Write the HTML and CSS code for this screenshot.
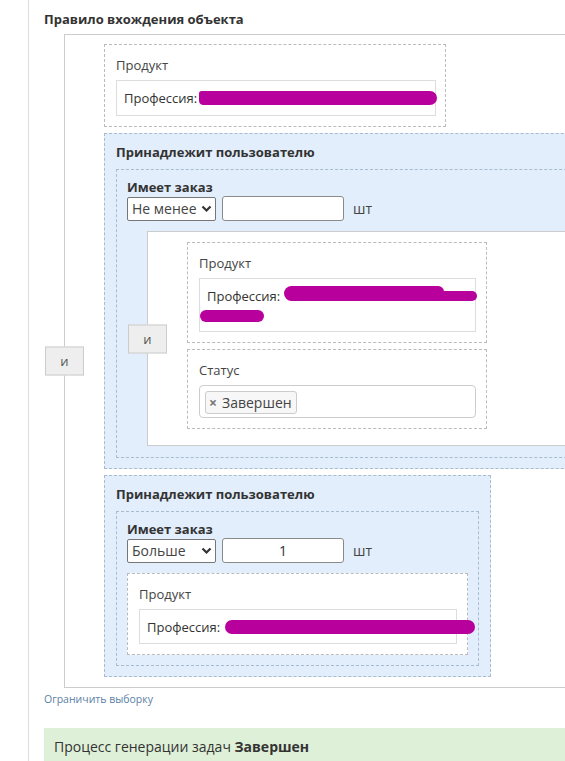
FILE: index.html
```html
<!DOCTYPE html>
<html lang="ru">
<head>
<meta charset="utf-8">
<link rel="stylesheet" href="styles.css">
</head>
<body>
<div class="page">
  <div class="title">Правило вхождения объекта</div>
  <div class="group outer">
    <div class="op">и</div>
    <div class="item cond c-first">
      <div class="label">Продукт</div>
      <div class="field f-first">Профессия:<span class="scrib s1"></span></div>
    </div>
    <div class="item user u-first">
      <div class="user-title">Принадлежит пользователю</div>
      <div class="order o-first">
        <div class="order-title">Имеет заказ</div>
        <div class="order-row">
          <div class="select">Не менее<svg class="chev" width="11" height="8" viewBox="0 0 11 8"><path d="M1.5 1.5 L5.5 5.5 L9.5 1.5" fill="none" stroke="#333" stroke-width="2.2"/></svg></div>
          <div class="num"></div>
          <span class="unit">шт</span>
        </div>
        <div class="group nested">
          <div class="op">и</div>
          <div class="item cond c-nested">
            <div class="label">Продукт</div>
            <div class="field f-nested tall">Профессия:<span class="scrib s2a"></span><span class="scrib s2b"></span><span class="scrib s2c"></span></div>
          </div>
          <div class="item cond c-nested">
            <div class="label">Статус</div>
            <div class="tags">
              <span class="tag"><span class="tag-x">×</span>Завершен</span>
            </div>
          </div>
        </div>
      </div>
    </div>
    <div class="item user u-second">
      <div class="user-title">Принадлежит пользователю</div>
      <div class="order">
        <div class="order-title">Имеет заказ</div>
        <div class="order-row">
          <div class="select">Больше<svg class="chev" width="11" height="8" viewBox="0 0 11 8"><path d="M1.5 1.5 L5.5 5.5 L9.5 1.5" fill="none" stroke="#333" stroke-width="2.2"/></svg></div>
          <div class="num">1</div>
          <span class="unit">шт</span>
        </div>
        <div class="item cond c-white">
          <div class="label">Продукт</div>
          <div class="field f-white">Профессия: <span class="scrib s3"></span></div>
        </div>
      </div>
    </div>
  </div>
  <a class="limit" href="#">Ограничить выборку</a>
  <div class="status">Процесс генерации задач <b>Завершен</b></div>
</div>
</body>
</html>
```
FILE: styles.css
```css
html, body {
  margin: 0;
  padding: 0;
  overflow: hidden;
  background: #fff;
}
body {
  font-family: "Open Sans", "Liberation Sans", sans-serif;
  font-size: 13px;
  color: #333;
  width: 565px;
  height: 761px;
}
.page {
  margin-left: 28px;
  border-left: 1px solid #ddd;
  padding: 10px 0 0 15px;
  height: 751px;
}
.title {
  font-weight: 700;
  font-size: 13px;
  line-height: 18px;
  color: #333;
  margin-bottom: 6px;
}
.group {
  position: relative;
  border: 1px solid #ccc;
  background: #fff;
  display: flex;
  flex-direction: column;
  align-items: flex-start;
  gap: 6px;
}
.outer {
  margin-left: 20px;
  width: 560px;
  padding: 9px 0 10px 39px;
}
.nested {
  width: 420px;
  padding: 10px 0 16px 39px;
  margin: 10px 0 0 20px;
}
.op {
  position: absolute;
  left: -20px;
  top: 50%;
  transform: translateY(-50%);
  width: 37px;
  height: 27px;
  line-height: 27px;
  text-align: center;
  background: #eee;
  border: 1px solid #ccc;
  color: #555;
  font-size: 13px;
}
.item {
  box-sizing: border-box;
}
.cond {
  border: 1px dashed #bbb;
  background: #fff;
  padding: 11px 9px 10px 11px;
}
.c-first { width: 342px; }
.c-nested { width: 300px; padding-right: 10px; }
.c-white { width: 341px; margin-top: 10px; padding-right: 10px; }
.label {
  line-height: 18px;
  color: #444;
  margin-bottom: 6px;
}
.field {
  position: relative;
  border: 1px solid #ddd;
  padding: 8px 7px;
  line-height: 18px;
  color: #333;
  white-space: nowrap;
}
.f-white { padding-bottom: 7px; }
.tall { height: 36px; }
.scrib {
  position: absolute;
  background: #b8009c;
  border-radius: 8px;
}
.s1 { left: 82px; top: 10px; width: 238px; height: 14px; border-radius: 3px 8px 8px 5px; }
.s2a { left: 84px; top: 7px; width: 160px; height: 15px; border-radius: 8px 6px 6px 8px; }
.s2b { left: 230px; top: 12px; width: 47px; height: 10px; border-radius: 6px; }
.s2c { left: 0px; top: 31px; width: 64px; height: 12px; border-radius: 6px; }
.s3 { left: 85px; top: 10px; width: 250px; height: 14px; border-radius: 7px; }
.user {
  background: #e2eefb;
  border: 1px dashed #a9bccf;
  padding: 9px 11px 10px 11px;
}
.u-first { width: 520px; }
.u-second { width: 387px; }
.user-title {
  font-weight: 700;
  line-height: 18px;
  color: #333;
  margin-bottom: 8px;
}
.order {
  border: 1px dashed #a9bccf;
  padding: 8px 10px 10px 10px;
}
.o-first { padding-bottom: 11px; }
.order-title {
  font-weight: 700;
  line-height: 18px;
  color: #333;
}
.order-row {
  display: flex;
  align-items: center;
  gap: 6px;
  height: 25px;
}
.select {
  box-sizing: border-box;
  width: 89px;
  height: 24px;
  border: 1px solid #777;
  border-radius: 2px;
  background: #fff;
  display: flex;
  align-items: center;
  justify-content: space-between;
  padding: 0 3px 0 4px;
  font-size: 14px;
  color: #444;
}
.num {
  box-sizing: border-box;
  width: 122px;
  height: 25px;
  border: 1px solid #8a8a8a;
  border-radius: 3px;
  background: #fff;
  text-align: center;
  line-height: 23px;
  font-size: 14px;
  color: #333;
}
.unit {
  margin-left: 3px;
  font-size: 14px;
  color: #444;
}
.tags {
  border: 1px solid #ccc;
  border-radius: 4px;
  padding: 5px 5px 3px;
  background: #fff;
  display: flex;
}
.tag {
  box-sizing: border-box;
  height: 23px;
  border: 1px solid #ccc;
  border-radius: 3px;
  background: #f7f7f7;
  padding: 0 4px 0 3px;
  display: flex;
  align-items: center;
  font-size: 14px;
  color: #444;
}
.tag-x {
  font-weight: 700;
  color: #777;
  margin-right: 5px;
  font-size: 14px;
}
.limit {
  display: block;
  margin-top: 4px;
  font-size: 10.5px;
  line-height: 14px;
  color: #5b7fa6;
  text-decoration: none;
}
.status {
  margin-top: 22px;
  background: #dff0d8;
  padding: 10px 10px 10px 10px;
  font-size: 14px;
  line-height: 18px;
  color: #333;
}
```
